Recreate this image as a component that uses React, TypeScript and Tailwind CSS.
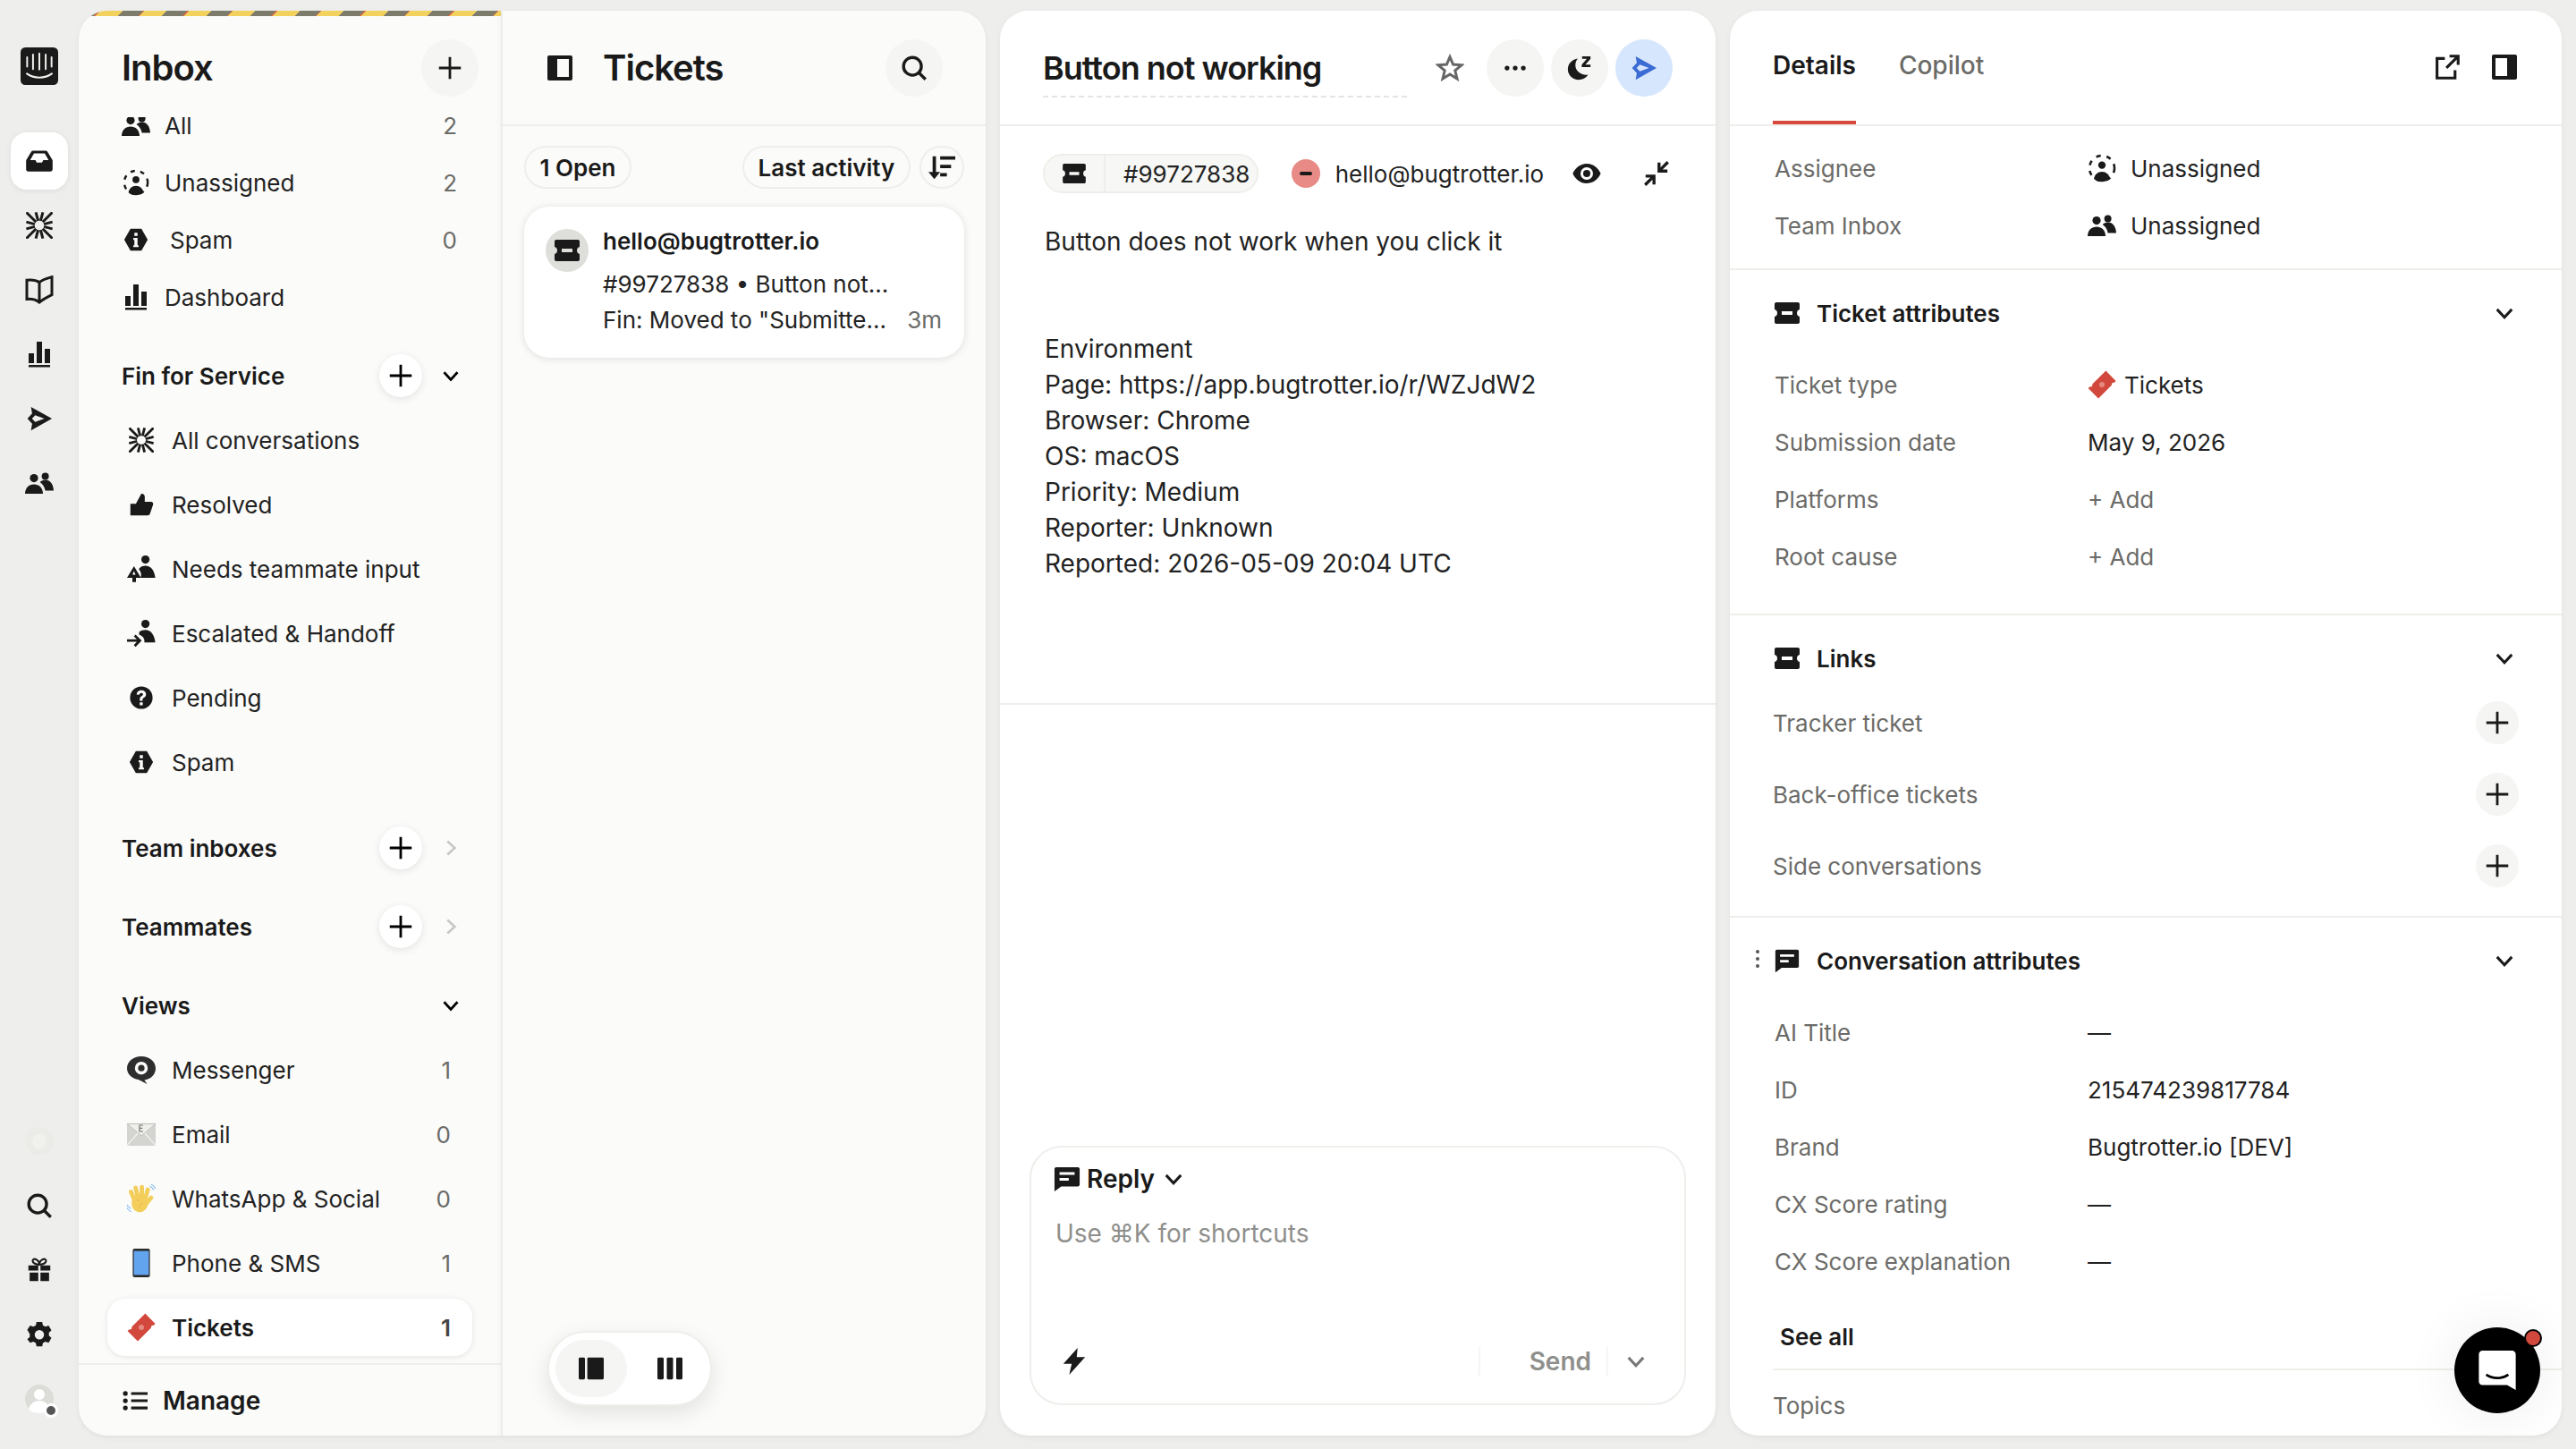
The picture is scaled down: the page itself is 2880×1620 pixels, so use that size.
import type { ReactNode } from "react";

type IconProps = { className?: string };

// All drawn icons share a 16-unit box, sized through className
function Svg({ className = "w-[32px] h-[32px]", children }: IconProps & { children: ReactNode }) {
  return (
    <svg viewBox="0 0 16 16" fill="currentColor" className={`shrink-0 ${className}`}>
      {children}
    </svg>
  );
}

const Logo = ({ className }: IconProps) => (
  <Svg className={className}>
    <rect x="0" y="0" width="16" height="16" rx="2" fill="#1a1a1a" />
    <g stroke="#f0f0ed" strokeWidth="0.75" strokeLinecap="round" fill="none">
      <path d="M2.8 4.2v4M5.3 3v6.2M8 2.6v6.8M10.7 3v6.2M13.2 4.2v4" />
      <path d="M2.7 11.2c3 2.2 7.6 2.2 10.6 0" strokeWidth="0.8" />
    </g>
  </Svg>
);
const Tray = ({ className }: IconProps) => (
  <Svg className={className}>
    <path
      fillRule="evenodd"
      d="M4.2 1.8h7.6c.4 0 .7.2.9.5L15.6 7c.2.3.3.6.3.9v5c0 .8-.6 1.3-1.3 1.3H1.4C.6 14.2.1 13.7.1 12.9v-5c0-.3.1-.6.3-.9l2.9-4.7c.2-.3.5-.5.9-.5zM4.8 3.4 2.5 7.4h3.2l.7 1.500h3.200l.7-1.500h3.200l-2.300-4z"
    />
  </Svg>
);
const Burst = ({ className }: IconProps) => {
  const angles = [-75, -45, -15, 15, 45, 75, 105, 135, 165, 195, 225, 255];
  return (
    <Svg className={className}>
      <g stroke="currentColor" strokeWidth="1.600" fill="none">
        {angles.map((a) => {
          const r = (a * Math.PI) / 180;
          const c = Math.cos(r);
          const s = Math.sin(r);
          const outer = 7.8 / Math.max(Math.abs(c), Math.abs(s));
          return <line key={a} x1={8 + 2.8 * c} y1={8 + 2.8 * s} x2={8 + outer * c} y2={8 + outer * s} />;
        })}
      </g>
    </Svg>
  );
};
const Book = ({ className }: IconProps) => (
  <Svg className={className}>
    <path
      d="M8 3.800C6.400 2.800 3.500 2.300 1 2.600v10.600c2.500-.2 5.200.3 7 1.800 1.800-1.500 4.500-3 7-4.200V.8C12.500 1.500 9.500 2.500 8 3.800zM8 3.800V14.800"
      fill="none"
      stroke="currentColor"
      strokeWidth="1.500"
    />
  </Svg>
);
const Bars = ({ className }: IconProps) => (
  <Svg className={className}>
    <path d="M2 7.500h3V13H2zM6.500 1h3v12h-3zM11 5h3v8h-3zM2 14h12v1.300H2z" />
  </Svg>
);
const Plane = ({ className }: IconProps) => (
  <Svg className={className}>
    <path fillRule="evenodd" d="M3 1 15.500 8 3 15l.7-3.900L.9 8l2.800-3.100zM5.500 6 3.600 8l1.900 2L11 8z" />
  </Svg>
);
const People = ({ className }: IconProps) => (
  <Svg className={className}>
    <circle cx="5" cy="5.300" r="2.300" />
    <circle cx="11.300" cy="4.200" r="2" />
    <path d="M0 14c0-3.300 2.200-5.300 5-5.300s5 2 5 5.300z" />
    <path d="M8.300 7.500c.8-.8 1.900-1.300 3-1.300 2.600 0 4.500 2.200 4.700 6h-4.700c-.3-1.900-1.300-3.500-3-4.700z" />
  </Svg>
);
const Unassigned = ({ className }: IconProps) => (
  <Svg className={className}>
    <circle cx="8" cy="8" r="7" fill="none" stroke="currentColor" strokeWidth="1.300" strokeDasharray="2.600 3.300" />
    <circle cx="8" cy="6.300" r="2.100" />
    <path d="M3.500 14c.4-2.400 2.200-4 4.500-4s4.100 1.600 4.500 4c-1.200 1-2.800 1.600-4.500 1.600S4.700 15 3.500 14z" />
  </Svg>
);
const Hex = ({ className }: IconProps) => (
  <Svg className={className}>
    <path
      fillRule="evenodd"
      d="M4.500 1h7l4 7-4 7h-7l-4-7zM7 3.500v2h2v-2zM6.300 6.800v1.300H7v3.400h-.7v1.200h3.400v-1.200H9V6.800z"
    />
  </Svg>
);
const Thumb = ({ className }: IconProps) => (
  <Svg className={className}>
    <path d="M1 7.500h3.500L8 1.100c1.200-.2 2.200.7 2.200 1.900v3.300h4c1 0 1.600.9 1.300 1.800l-2 5.900c-.2.600-.8 1-1.400 1H1z" />
  </Svg>
);
const NeedsInput = ({ className }: IconProps) => (
  <Svg className={className}>
    <circle cx="10.300" cy="2.800" r="2.300" />
    <path d="M7.500 13c.8-1.500.4-3.200-.9-5 .9-1.300 2.300-1.800 3.700-1.800 3 0 5 2.400 5.500 6.800z" />
    <path fillRule="evenodd" d="M3.900 6.500 7.800 13H5v2.400H3V13H0zM3.900 9.300 3 11.200h1.800z" />
  </Svg>
);
const Handoff = ({ className }: IconProps) => (
  <Svg className={className}>
    <circle cx="10.300" cy="2.800" r="2.300" />
    <path d="M6.800 7.300c1-.8 2.200-1.200 3.500-1.200 3 0 5 2.600 5.500 7H9.700c.3-1.900-.7-3.500-2.900-4.200z" />
    <path d="M0 11.400h5.500L3.800 9.700l1-1 3.400 3.400-3.400 3.500-1-1 1.700-1.800H0z" />
  </Svg>
);
const Question = ({ className }: IconProps) => (
  <Svg className={className}>
    <path
      fillRule="evenodd"
      d="M8 .8a7.200 7.200 0 1 0 0 14.400A7.200 7.200 0 0 0 8 .8zM8 3.300c1.800 0 3 1.100 3 2.600 0 1.200-.7 1.800-1.500 2.300-.5.300-.7.500-.7 1V10H7V9c0-1 .6-1.600 1.300-2.100.5-.3.800-.5.800-1 0-.5-.4-.9-1.100-.9-.7 0-1.200.4-1.300 1.200L5 6c.1-1.600 1.400-2.700 3-2.700zM7 11h1.900v1.800H7z"
    />
  </Svg>
);
const Messenger = ({ className }: IconProps) => (
  <Svg className={className}>
    <path
      fillRule="evenodd"
      d="M8 .5c4.400 0 8 2.800 8 6.700 0 3.500-2.800 6.100-6.300 6.500l1.600 2.300-4.900-2.500C2.800 12.900 0 10.400 0 7.200 0 3.300 3.600.5 8 .5zM8 3.500a3.600 3.600 0 1 0 0 7.200 3.600 3.600 0 0 0 0-7.200z"
      fill="#2e2e2e"
    />
    <circle cx="8" cy="7.100" r="1.800" fill="#2e2e2e" />
  </Svg>
);
const Envelope = ({ className }: IconProps) => (
  <Svg className={className}>
    <rect x="0" y="2" width="16" height="12.500" rx="0.500" fill="#d4d4d1" />
    <path d="M0 2.200 8 9l8-6.800z" fill="#eeeeeb" stroke="#bdbdb9" strokeWidth="0.500" />
    <path d="M0 14.300 6 7.500M16 14.300 10 7.500" stroke="#f4f4f2" strokeWidth="0.600" />
    <path d="M9 3H7v3.500h2M7 4.700h1.600" stroke="#77776f" strokeWidth="0.600" fill="none" />
  </Svg>
);
const Wave = ({ className }: IconProps) => (
  <Svg className={className}>
    <g stroke="#f3ce5a" strokeWidth="2.400" strokeLinecap="round">
      <path d="M4 8.500 2.200 4.200M6 7 4.800 2M8.300 6.500 8.300 1.600M10.500 7l1.100-4M11 10.500 13.500 7.500" />
    </g>
    <ellipse cx="7.300" cy="10.300" rx="4.600" ry="5.400" transform="rotate(15 7.300 10.300)" fill="#f3ce5a" />
    <circle cx="6" cy="9" r="0.400" fill="#e8a060" />
    <circle cx="8" cy="11" r="0.400" fill="#e8a060" />
    <circle cx="6.800" cy="12.500" r="0.400" fill="#e8a060" />
    <path d="M12.800 1.200c1 .3 1.700 1 2 2M13.600.2c1 .3 1.900 1.200 2.200 2.300M.2 11.500c.3 1 1 1.700 2 2M0 13c.4 1 1.100 1.900 2.200 2.300" stroke="#63a8ee" strokeWidth="0.500" fill="none" />
  </Svg>
);
const Phone = ({ className }: IconProps) => (
  <Svg className={className}>
    <rect x="3.200" y="0" width="9.600" height="16" rx="1" fill="#2b2b2b" />
    <rect x="3.800" y="1.300" width="8.400" height="13.400" fill="#63a4ee" />
  </Svg>
);
const RedTicket = ({ className }: IconProps) => (
  <Svg className={className}>
    <path
      d="M10.200.3 15.800 6l-1 1c-.4-.2-.8-.1-1.100.2-.3.3-.4.700-.2 1.100L6 15.700.3 10l1-.9c.4.200.8.100 1.100-.2.300-.3.400-.8.200-1.200z"
      fill="#d2483d"
    />
    <circle cx="8" cy="8" r="1.500" fill="#e58a80" />
  </Svg>
);
const TicketFlat = ({ className = "w-[28px] h-[24px]" }: IconProps) => (
  <svg viewBox="0 0 14 12" className={`shrink-0 ${className}`} fill="currentColor">
    <path
      fillRule="evenodd"
      d="M1 0h12c.6 0 1 .4 1 1v3c-1 .2-1.500 1-1.500 2s.5 1.800 1.500 2v3c0 .6-.4 1-1 1H1c-.6 0-1-.4-1-1V8c1-.2 1.500-1 1.500-2S1 4.200 0 4V1c0-.6.4-1 1-1zM4 5v2h6V5z"
    />
  </svg>
);
const ListIcon = ({ className }: IconProps) => (
  <Svg className={className}>
    <path d="M5.500 2.500H16v1.800H5.500zM5.500 7.100H16v1.800H5.500zM5.500 11.700H16v1.800H5.500z" />
    <circle cx="1.800" cy="3.400" r="1.500" />
    <circle cx="1.800" cy="8" r="1.500" />
    <circle cx="1.800" cy="12.600" r="1.500" />
  </Svg>
);
const Sort = ({ className }: IconProps) => (
  <Svg className={className}>
    <path d="M2.500 1.500h2v9.300H7L3.500 15 0 10.800h2.500zM7 1.500h9v2H7zM7 6.500h6.500v2H7zM7 11.500h4v2H7z" />
  </Svg>
);
const PanelIcon = ({ className, right }: IconProps & { right?: boolean }) => (
  <Svg className={className}>
    <path
      fillRule="evenodd"
      d={
        right
          ? "M2 1h12c.6 0 1 .4 1 1v12c0 .6-.4 1-1 1H2c-.6 0-1-.4-1-1V2c0-.6.4-1 1-1zM3 3v10h6.500V3z"
          : "M2 1h12c.6 0 1 .4 1 1v12c0 .6-.4 1-1 1H2c-.6 0-1-.4-1-1V2c0-.6.4-1 1-1zM6.500 3v10H13V3z"
      }
    />
  </Svg>
);
const Search = ({ className }: IconProps) => (
  <Svg className={className}>
    <circle cx="7" cy="7" r="5.300" fill="none" stroke="currentColor" strokeWidth="1.800" />
    <path d="M10.800 10.800 14.800 14.800" stroke="currentColor" strokeWidth="1.800" />
  </Svg>
);
const Gift = ({ className }: IconProps) => (
  <Svg className={className}>
    <path d="M1 5h6.300v3.300H1zM8.700 5H15v3.300H8.700zM1.800 9.500h5.500V15H1.800zM8.700 9.500h5.500V15H8.700z" />
    <path d="M8 4.500C6 4.500 3.700 3.600 3.700 2.200 3.700 1 5 .6 6 1.200 7.100 1.800 8 3.300 8 4.500zm0 0c2 0 4.300-.9 4.300-2.300C12.300 1 11 .6 10 1.200 8.900 1.800 8 3.300 8 4.500z" fill="none" stroke="currentColor" strokeWidth="1.200" />
  </Svg>
);
const Gear = ({ className }: IconProps) => (
  <Svg className={className}>
    <path
      fillRule="evenodd"
      d="M6.300.5h3.400l.4 2 1.500.8 1.900-.7 1.700 2.900-1.500 1.400v1.700l1.500 1.400-1.700 2.900-1.900-.7-1.500.8-.4 2H6.300l-.4-2-1.500-.8-1.900.7L.8 10.800l1.500-1.400V7.700L.8 5.200 2.500 2.600l1.900.7 1.500-.8zM8 5.300a2.800 2.800 0 1 0 0 5.600 2.800 2.800 0 0 0 0-5.600z"
    />
  </Svg>
);
const Plus = ({ className = "w-[26px] h-[26px]" }: IconProps) => (
  <Svg className={className}>
    <path d="M7.200 1h1.600v6.200H15v1.600H8.800V15H7.200V8.800H1V7.200h6.200z" />
  </Svg>
);
const Chevron = ({ className = "w-[20px] h-[20px]", dir = "down" }: IconProps & { dir?: "down" | "right" }) => (
  <Svg className={className}>
    <path
      d={dir === "down" ? "M2 5l6 6.500L14 5" : "M5 2l6.500 6L5 14"}
      fill="none"
      stroke="currentColor"
      strokeWidth="2.200"
    />
  </Svg>
);
const Star = ({ className }: IconProps) => (
  <Svg className={className}>
    <path
      d="M8 1.800 9.800 6l4.700.4-3.600 3 1.100 4.600L8 11.500 4 14l1.100-4.600-3.600-3L6.200 6z"
      fill="none"
      stroke="currentColor"
      strokeWidth="1.500"
    />
  </Svg>
);
const Dots = ({ className }: IconProps) => (
  <Svg className={className}>
    <circle cx="2.800" cy="8" r="1.500" />
    <circle cx="8" cy="8" r="1.500" />
    <circle cx="13.200" cy="8" r="1.500" />
  </Svg>
);
const Snooze = ({ className }: IconProps) => (
  <Svg className={className}>
    <path d="M7 2.400C3.600 2.800 1 5.400 1 8.800c0 3.500 2.900 6.200 6.400 6.200 2.400 0 4.500-1.100 5.600-3-3.900.6-7.500-2.100-7.500-5.600 0-1.700.5-3 1.500-4z" />
    <path d="M9.500 1h5v1.500l-3 3.500h3v1.500h-5.200V6l3-3.500H9.500z" />
  </Svg>
);
const Eye = ({ className }: IconProps) => (
  <Svg className={className}>
    <path
      fillRule="evenodd"
      d="M8 2.500c3.800 0 6.500 2.500 7.800 5.500-1.300 3-4 5.500-7.800 5.500S1.500 11 .2 8C1.500 5 4.200 2.500 8 2.500zM8 4.500a3.500 3.500 0 1 0 0 7 3.500 3.500 0 0 0 0-7z"
    />
    <circle cx="8" cy="8" r="2" />
  </Svg>
);
const Collapse = ({ className }: IconProps) => (
  <Svg className={className}>
    <path d="M9.500 1.500v5h5M9.800 6.200 14.800 1.200M1.500 9.500h5v5M6.200 9.800l-5 5" fill="none" stroke="currentColor" strokeWidth="1.800" />
  </Svg>
);
const External = ({ className }: IconProps) => (
  <Svg className={className}>
    <path d="M6.500 2.500H1.500v12.500h11.500v-5" fill="none" stroke="currentColor" strokeWidth="1.800" />
    <path d="M9.500 1h5.500v5.500M14.700 1.300 7.500 8.500" fill="none" stroke="currentColor" strokeWidth="1.800" />
  </Svg>
);
const Bubble = ({ className }: IconProps) => (
  <Svg className={className}>
    <path
      fillRule="evenodd"
      d="M1.500 1h13c.5 0 1 .5 1 1v9.500c0 .5-.5 1-1 1H4.500L.5 15.500V2c0-.5.5-1 1-1zM3.500 4v1.600h9V4zM3.500 7.500v1.600h5.500V7.500z"
    />
  </Svg>
);
const Bolt = ({ className }: IconProps) => (
  <Svg className={className}>
    <path d="M10 0 1.500 9.500h5L5 16l9.500-10.500h-5z" />
  </Svg>
);
const ViewSplit = ({ className }: IconProps) => (
  <Svg className={className}>
    <rect x="0" y="1" width="4" height="14" rx="0.800" />
    <rect x="5.500" y="1" width="10.500" height="14" rx="0.800" />
  </Svg>
);
const ViewCols = ({ className }: IconProps) => (
  <Svg className={className}>
    <rect x="0" y="1" width="4" height="14" rx="0.800" />
    <rect x="6" y="1" width="4" height="14" rx="0.800" />
    <rect x="12" y="1" width="4" height="14" rx="0.800" />
  </Svg>
);

const RAIL_TOP = [
  { key: "fin", icon: <Burst className="w-[30px] h-[30px]" /> },
  { key: "book", icon: <Book className="w-[32px] h-[32px]" /> },
  { key: "bars", icon: <Bars className="w-[32px] h-[32px]" /> },
  { key: "plane", icon: <Plane className="w-[30px] h-[30px]" /> },
  { key: "people", icon: <People className="w-[32px] h-[32px]" /> },
];

function Rail() {
  const cell = "h-[64px] w-[64px] flex items-center justify-center";
  return (
    <aside className="w-[88px] shrink-0 flex flex-col items-center pt-[41px] pb-[9px] text-[#1a1a1a]">
      <Logo className="w-[42px] h-[42px]" />
      <div className="mt-[53px] flex flex-col gap-[8px]">
        <div className={`${cell} bg-white rounded-[18px] shadow-[0_1px_6px_rgba(0,0,0,0.08)]`}>
          <Tray className="w-[30px] h-[30px]" />
        </div>
        {RAIL_TOP.map((r) => (
          <div key={r.key} className={cell}>
            {r.icon}
          </div>
        ))}
      </div>
      <div className="mt-auto flex flex-col gap-[8px]">
        <div className={cell}>
          <div className="w-[32px] h-[32px] rounded-full border-[8px] border-[#ebebe8] bg-[#f1f1ee]" />
        </div>
        <div className={cell}>
          <Search className="w-[30px] h-[30px]" />
        </div>
        <div className={cell}>
          <Gift className="w-[28px] h-[28px]" />
        </div>
        <div className={cell}>
          <Gear className="w-[30px] h-[30px]" />
        </div>
        <div className={cell}>
          <div className="relative w-[32px] h-[32px] rounded-full bg-[#dcdcd9] flex items-center justify-center">
            <svg viewBox="0 0 16 16" className="w-[32px] h-[32px]" fill="#fff">
              <circle cx="8" cy="5.500" r="3" />
              <path d="M2 14c.5-3 3-5 6-5s5 2 6 5c-1.500 1.200-3.700 2-6 2s-4.500-.8-6-2z" />
            </svg>
            <span className="absolute right-[-5px] bottom-[-5px] w-[10px] h-[10px] rounded-full bg-[#555] border-[3px] border-white box-content" />
          </div>
        </div>
      </div>
    </aside>
  );
}

function NavRow({
  icon,
  label,
  count,
  indent,
  offset,
}: {
  icon: ReactNode;
  label: string;
  count?: number;
  indent?: boolean;
  offset?: boolean;
}) {
  if (indent) {
    return (
      <div className="h-[72px] flex items-center pl-[54px] pr-[56px]">
        <span className="w-[32px] flex justify-center shrink-0">{icon}</span>
        <span className="ml-[18px] flex-1 text-[#222]">{label}</span>
        {count !== undefined && <span className="text-[#6b6b68]">{count}</span>}
      </div>
    );
  }
  return (
    <div className="h-[64px] flex items-center pl-[48px] pr-[49px]">
      <span className="w-[32px] flex justify-center shrink-0">{icon}</span>
      <span className={`flex-1 text-[#222] ${offset ? "ml-[22px]" : "ml-[16px]"}`}>{label}</span>
      {count !== undefined && <span className="text-[#6b6b68]">{count}</span>}
    </div>
  );
}

function SectionHead({ title, open }: { title: string; open: boolean }) {
  return (
    <div className="h-[64px] flex items-center pl-[48px] pr-[46px]">
      <span className="flex-1 font-semibold text-[#1a1a1a]">{title}</span>
      <span className="w-[48px] h-[48px] rounded-full bg-white shadow-[0_2px_8px_rgba(0,0,0,0.1)] flex items-center justify-center">
        <Plus className="w-[28px] h-[28px]" />
      </span>
      <span className="w-[42px] flex justify-end">
        {open ? (
          <Chevron className="w-[20px] h-[20px]" />
        ) : (
          <Chevron dir="right" className="w-[20px] h-[20px] text-[#c8c8c5]" />
        )}
      </span>
    </div>
  );
}

function ViewsHead() {
  return (
    <div className="h-[64px] flex items-center pl-[48px] pr-[46px] mt-[24px]">
      <span className="flex-1 font-semibold text-[#1a1a1a]">Views</span>
      <Chevron className="w-[20px] h-[20px]" />
    </div>
  );
}

function InboxPanel() {
  const ic = "w-[32px] h-[32px] text-[#1a1a1a]";
  return (
    <section className="w-[472px] shrink-0 flex flex-col bg-[#fbfbf9] rounded-l-[32px] overflow-hidden shadow-[0_2px_6px_rgba(0,0,0,0.06)] text-[26px]">
      <div className="h-[6px] shrink-0 bg-[repeating-linear-gradient(135deg,#7d7b6b_0,#7d7b6b_16px,#d9684a_16px,#d9684a_17px,#f2d15c_17px,#f2d15c_35px)]" />
      <header className="h-[113px] shrink-0 flex items-start pl-[48px] pr-[25px] pt-[26px]">
        <h1 className="flex-1 text-[40px] leading-[64px] font-semibold tracking-[-1px] text-[#1a1a1a]">Inbox</h1>
        <span className="w-[64px] h-[64px] rounded-full bg-[#f5f5f3] flex items-center justify-center">
          <Plus className="w-[28px] h-[28px] text-[#1a1a1a]" />
        </span>
      </header>

      <div className="flex-1 min-h-0 overflow-hidden">
        <div className="-mt-[23px]">
          <NavRow icon={<People className={ic} />} label="All" count={2} />
          <NavRow icon={<Unassigned className="w-[30px] h-[30px] text-[#1a1a1a]" />} label="Unassigned" count={2} />
          <NavRow icon={<Hex className="w-[28px] h-[28px] text-[#1a1a1a]" />} label="Spam" count={0} offset />
          <NavRow icon={<Bars className={ic} />} label="Dashboard" />

          <div className="mt-[24px] mb-[4px]">
            <SectionHead title="Fin for Service" open />
          </div>
          <NavRow indent icon={<Burst className="w-[28px] h-[28px] text-[#1a1a1a]" />} label="All conversations" />
          <NavRow indent icon={<Thumb className="w-[28px] h-[28px] text-[#1a1a1a]" />} label="Resolved" />
          <NavRow indent icon={<NeedsInput className={ic} />} label="Needs teammate input" />
          <NavRow indent icon={<Handoff className={ic} />} label="Escalated & Handoff" />
          <NavRow indent icon={<Question className="w-[28px] h-[28px] text-[#1a1a1a]" />} label="Pending" />
          <NavRow indent icon={<Hex className="w-[28px] h-[28px] text-[#1a1a1a]" />} label="Spam" />

          <div className="mt-[28px]">
            <SectionHead title="Team inboxes" open={false} />
          </div>
          <div className="mt-[24px]">
            <SectionHead title="Teammates" open={false} />
          </div>
          <ViewsHead />
          <div className="mt-[4px]">
            <NavRow indent icon={<Messenger className="w-[32px] h-[32px]" />} label="Messenger" count={1} />
            <NavRow indent icon={<Envelope className="w-[32px] h-[32px]" />} label="Email" count={0} />
            <NavRow indent icon={<Wave className="w-[32px] h-[32px]" />} label="WhatsApp & Social" count={0} />
            <NavRow indent icon={<Phone className="w-[32px] h-[32px]" />} label="Phone & SMS" count={1} />
            <div className="h-[72px] flex items-center px-[32px]">
              <div className="w-[408px] h-[64px] flex items-center pl-[22px] pr-[24px] bg-white rounded-[20px] shadow-[0_1px_6px_rgba(0,0,0,0.1)]">
                <span className="w-[32px] flex justify-center">
                  <RedTicket className="w-[32px] h-[32px]" />
                </span>
                <span className="ml-[18px] flex-1 font-semibold text-[#1a1a1a]">Tickets</span>
                <span className="font-semibold text-[#444]">1</span>
              </div>
            </div>
          </div>
        </div>
      </div>

      <footer className="h-[81px] shrink-0 border-t-2 border-[#eeeeeb] flex items-center pl-[49px]">
        <ListIcon className="w-[28px] h-[28px] text-[#1a1a1a]" />
        <span className="ml-[17px] text-[28px] font-semibold text-[#1a1a1a]">Manage</span>
      </footer>
    </section>
  );
}

function TicketsPanel() {
  return (
    <section className="relative w-[542px] shrink-0 flex flex-col bg-[#fbfbf9] border-l-2 border-[#eceeea] rounded-r-[32px] shadow-[0_2px_6px_rgba(0,0,0,0.06)] text-[26px]">
      <header className="h-[129px] shrink-0 border-b-2 border-[#eeeeeb] flex items-center pl-[48px] pr-[48px] pt-[1px]">
        <PanelIcon className="w-[32px] h-[32px] text-[#1a1a1a]" />
        <h2 className="ml-[32px] flex-1 text-[40px] font-semibold tracking-[-1px] text-[#1a1a1a]">Tickets</h2>
        <span className="w-[64px] h-[64px] rounded-full bg-[#f5f5f3] flex items-center justify-center">
          <Search className="w-[30px] h-[30px] text-[#1a1a1a]" />
        </span>
      </header>

      <div className="px-[24px] pt-[22px] flex items-center">
        <span className="h-[48px] w-[120px] justify-center rounded-full border-2 border-[#eeeeeb] flex items-center font-semibold text-[#1a1a1a]">
          1 Open
        </span>
        <span className="ml-auto h-[48px] w-[188px] justify-center rounded-full border-2 border-[#eeeeeb] flex items-center font-semibold text-[#1a1a1a]">
          Last activity
        </span>
        <span className="ml-[10px] w-[50px] h-[48px] rounded-full border-2 border-[#eeeeeb] flex items-center justify-center">
          <Sort className="w-[30px] h-[30px] text-[#1a1a1a]" />
        </span>
      </div>

      <article className="mx-[24px] mt-[20px] h-[169px] bg-white rounded-[28px] shadow-[0_1px_8px_rgba(0,0,0,0.12)] flex pl-[24px] pr-[25px] pt-[25px]">
        <span className="w-[48px] h-[48px] rounded-full bg-[#dededb] flex items-center justify-center shrink-0">
          <TicketFlat className="w-[28px] h-[24px] text-[#1a1a1a]" />
        </span>
        <div className="ml-[16px] flex-1 -mt-[6px] text-[#222]">
          <div className="font-semibold text-[#1a1a1a] leading-[40px]">hello@bugtrotter.io</div>
          <div className="leading-[40px] mt-[8px]">#99727838 • Button not...</div>
          <div className="leading-[40px] flex justify-between">
            <span>Fin: Moved to "Submitte...</span>
            <span className="text-[#6b6b68]">3m</span>
          </div>
        </div>
      </article>

      <div className="absolute left-[50px] bottom-[33px] w-[184px] h-[84px] rounded-full bg-white border-2 border-[#eeeeeb] shadow-[0_8px_24px_rgba(0,0,0,0.1)] flex items-center pl-[7px]">
        <span className="w-[80px] h-[64px] rounded-full bg-[#f5f5f3] flex items-center justify-center">
          <ViewSplit className="w-[28px] h-[28px] text-[#1a1a1a]" />
        </span>
        <span className="ml-[8px] w-[80px] flex justify-center">
          <ViewCols className="w-[28px] h-[28px] text-[#1a1a1a]" />
        </span>
      </div>
    </section>
  );
}

function RoundBtn({ children, blue }: { children: ReactNode; blue?: boolean }) {
  return (
    <span
      className={`w-[64px] h-[64px] rounded-full flex items-center justify-center ${
        blue ? "bg-[#d6e6fc] text-[#3b6cd4]" : "bg-[#f5f5f3] text-[#1a1a1a]"
      }`}
    >
      {children}
    </span>
  );
}

const BODY_LINES = [
  "Environment",
  "Page: https://app.bugtrotter.io/r/WZJdW2",
  "Browser: Chrome",
  "OS: macOS",
  "Priority: Medium",
  "Reporter: Unknown",
  "Reported: 2026-05-09 20:04 UTC",
];

function ConversationPanel() {
  return (
    <section className="w-[800px] shrink-0 ml-[16px] flex flex-col bg-white rounded-[32px] shadow-[0_2px_6px_rgba(0,0,0,0.06)] text-[28px] text-[#222]">
      <header className="h-[129px] shrink-0 border-b-2 border-[#eeeeeb] flex items-center pl-[48px] pr-[48px] pt-[1px]">
        <div className="w-[408px] h-[64px] border-b-2 border-dashed border-[#e4e4e1] mt-[1px] flex items-center">
          <h2 className="text-[36px] font-semibold tracking-[-1px] text-[#1a1a1a]">Button not working</h2>
        </div>
        <span className="ml-[32px] w-[32px] flex justify-center">
          <Star className="w-[32px] h-[32px] text-[#666]" />
        </span>
        <div className="ml-[25px] flex gap-[8px]">
          <RoundBtn>
            <Dots className="w-[28px] h-[28px]" />
          </RoundBtn>
          <RoundBtn>
            <Snooze className="w-[30px] h-[30px]" />
          </RoundBtn>
          <RoundBtn blue>
            <Plane className="w-[30px] h-[30px]" />
          </RoundBtn>
        </div>
      </header>

      <div className="h-[647px] shrink-0 border-b-2 border-[#eeeeeb] pl-[48px] pr-[50px] pt-[31px]">
        <div className="flex items-center h-[44px] text-[26px]">
          <span className="w-[247px] h-[44px] rounded-full bg-[#f7f7f5] border-2 border-[#eeeeeb] flex items-center">
            <span className="w-[68px] flex justify-center border-r-2 border-[#eeeeeb] h-[40px] items-center">
              <TicketFlat className="w-[28px] h-[22px] text-[#1a1a1a]" />
            </span>
            <span className="ml-[20px] text-[#222]">#99727838</span>
          </span>
          <span className="ml-[37px] w-[32px] h-[32px] rounded-full bg-[#e88a85] flex items-center justify-center">
            <span className="w-[14px] h-[4px] bg-[#1a1a1a] rounded-[2px]" />
          </span>
          <span className="ml-[17px] w-[233px]">hello@bugtrotter.io</span>
          <span className="ml-[32px] w-[32px]">
            <Eye className="w-[32px] h-[32px] text-[#1a1a1a]" />
          </span>
          <span className="ml-[47px] w-[32px]">
            <Collapse className="w-[30px] h-[30px] text-[#1a1a1a]" />
          </span>
        </div>
        <div className="mt-[34px] ml-[2px] leading-[40px]">
          <p>Button does not work when you click it</p>
          <div className="mt-[80px]">
            {BODY_LINES.map((line) => (
              <p key={line}>{line}</p>
            ))}
          </div>
        </div>
      </div>

      <div className="mt-auto mx-[33px] mb-[34px] h-[290px] rounded-[36px] border-2 border-[#eeeeeb] flex flex-col pl-[25px]">
        <div className="flex items-center h-[40px] mt-[15px] text-[#1a1a1a]">
          <Bubble className="w-[30px] h-[30px]" />
          <span className="ml-[7px] font-semibold">Reply</span>
          <Chevron className="ml-[10px] w-[22px] h-[22px]" />
        </div>
        <div className="mt-[21px] ml-[2px] leading-[40px] text-[#8f8f8c]">Use ⌘K for shortcuts</div>
        <div className="mt-auto mb-[23px] flex items-center h-[48px]">
          <Bolt className="ml-[8px] w-[30px] h-[30px] text-[#1a1a1a]" />
          <span className="ml-auto h-[32px] border-l-2 border-[#f5f5f3]" />
          <span className="ml-[55px] font-semibold text-[#8f8f8c]">Send</span>
          <span className="ml-[17px] h-[32px] border-l-2 border-[#f5f5f3]" />
          <Chevron className="ml-[20px] mr-[43px] w-[22px] h-[22px] text-[#777]" />
        </div>
      </div>
    </section>
  );
}

function AttrRow({ label, children }: { label: string; children: ReactNode }) {
  return (
    <div className="h-[64px] flex items-center">
      <span className="w-[350px] text-[#6b6b68] shrink-0">{label}</span>
      <span className="flex items-center text-[#222]">{children}</span>
    </div>
  );
}

function AttrHead({ icon, title }: { icon: ReactNode; title: string }) {
  return (
    <div className="h-[64px] flex items-center pr-[53px]">
      {icon}
      <span className="ml-[19px] flex-1 font-semibold text-[#1a1a1a]">{title}</span>
      <Chevron className="w-[22px] h-[22px] text-[#1a1a1a]" />
    </div>
  );
}

function LinkRow({ label }: { label: string }) {
  return (
    <div className="h-[80px] flex items-center justify-between -ml-[2px] pr-[48px]">
      <span className="text-[#6b6b68]">{label}</span>
      <span className="w-[48px] h-[48px] rounded-full bg-[#f5f5f3] flex items-center justify-center">
        <Plus className="w-[28px] h-[28px] text-[#1a1a1a]" />
      </span>
    </div>
  );
}

function DetailsPanel() {
  const div = "border-b-2 border-[#eeeeeb]";
  return (
    <section className="relative ml-[16px] w-[930px] shrink-0 flex flex-col bg-white rounded-[32px] overflow-hidden shadow-[0_2px_6px_rgba(0,0,0,0.06)] text-[26px]">
      <header className={`h-[129px] shrink-0 ${div} flex items-start pl-[48px] pr-[48px] text-[28px]`}>
        <div className="h-[127px] border-b-[4px] border-[#d9483c] pt-[41px] leading-[40px] font-semibold text-[#1a1a1a]">
          Details
        </div>
        <div className="ml-[48px] pt-[41px] leading-[40px] font-medium text-[#6b6b68]">Copilot</div>
        <div className="ml-auto pt-[47px] flex items-center text-[#1a1a1a]">
          <External className="w-[28px] h-[28px]" />
          <PanelIcon right className="ml-[34px] w-[32px] h-[32px]" />
        </div>
      </header>

      <div className={`pl-[50px] pt-[15px] pb-[16px] ${div}`}>
        <AttrRow label="Assignee">
          <Unassigned className="w-[32px] h-[32px] text-[#1a1a1a]" />
          <span className="ml-[16px]">Unassigned</span>
        </AttrRow>
        <AttrRow label="Team Inbox">
          <People className="w-[32px] h-[32px] text-[#1a1a1a]" />
          <span className="ml-[16px]">Unassigned</span>
        </AttrRow>
      </div>

      <div className={`pl-[50px] pt-[16px] pb-[32px] ${div}`}>
        <AttrHead icon={<TicketFlat className="w-[28px] h-[24px] text-[#1a1a1a]" />} title="Ticket attributes" />
        <div className="mt-[16px]">
          <AttrRow label="Ticket type">
            <RedTicket className="w-[32px] h-[32px]" />
            <span className="ml-[9px]">Tickets</span>
          </AttrRow>
          <AttrRow label="Submission date">May 9, 2026</AttrRow>
          <AttrRow label="Platforms">
            <span className="text-[#6b6b68]">+ Add</span>
          </AttrRow>
          <AttrRow label="Root cause">
            <span className="text-[#6b6b68]">+ Add</span>
          </AttrRow>
        </div>
      </div>

      <div className={`pl-[50px] pt-[16px] pb-[16px] ${div}`}>
        <AttrHead icon={<TicketFlat className="w-[28px] h-[24px] text-[#1a1a1a]" />} title="Links" />
        <LinkRow label="Tracker ticket" />
        <LinkRow label="Back-office tickets" />
        <LinkRow label="Side conversations" />
      </div>

      <div className="relative pl-[50px] pt-[16px]">
        <span className="absolute left-[29px] top-[36px] flex flex-col gap-[4px]">
          <span className="w-[4px] h-[4px] rounded-full bg-[#555]" />
          <span className="w-[4px] h-[4px] rounded-full bg-[#555]" />
          <span className="w-[4px] h-[4px] rounded-full bg-[#555]" />
        </span>
        <AttrHead icon={<Bubble className="w-[28px] h-[28px] text-[#1a1a1a]" />} title="Conversation attributes" />
        <div className="mt-[16px]">
          <AttrRow label="AI Title">—</AttrRow>
          <AttrRow label="ID">215474239817784</AttrRow>
          <AttrRow label="Brand">Bugtrotter.io [DEV]</AttrRow>
          <AttrRow label="CX Score rating">—</AttrRow>
          <AttrRow label="CX Score explanation">—</AttrRow>
        </div>
        <div className="mt-[28px] ml-[6px] h-[48px] flex items-center font-semibold text-[#1a1a1a]">See all</div>
        <div className="-ml-[2px] mt-[12px] border-t-2 border-[#eeeeeb] pt-[20px] leading-[40px] text-[#6b6b68]">Topics</div>
      </div>

      <div className="absolute right-[24px] bottom-[25px] w-[96px] h-[96px] rounded-full bg-black shadow-[0_0_60px_rgba(0,0,0,0.08)] flex items-center justify-center">
        <svg viewBox="0 0 16 16" className="w-[44px] h-[44px]">
          <path d="M2 0h12c.8 0 1.500.7 1.500 1.500V16l-3.500-2H2c-.8 0-1.500-.7-1.500-1.500v-11C.5.7 1.200 0 2 0z" fill="#fff" />
          <path d="M3.500 9.800c2.500 1.800 6.500 1.800 9 0" stroke="#000" strokeWidth="1" fill="none" />
        </svg>
        <span className="absolute right-[-2px] top-[2px] w-[20px] h-[20px] rounded-full bg-[#d2483d] border-2 border-black" />
      </div>
    </section>
  );
}

export default function App() {
  return (
    <div className="w-[2880px] h-[1620px] flex items-stretch pt-[12px] pb-[15px] bg-[#eeefec] overflow-hidden font-['Inter',sans-serif]">
      <Rail />
      <InboxPanel />
      <TicketsPanel />
      <ConversationPanel />
      <DetailsPanel />
    </div>
  );
}
